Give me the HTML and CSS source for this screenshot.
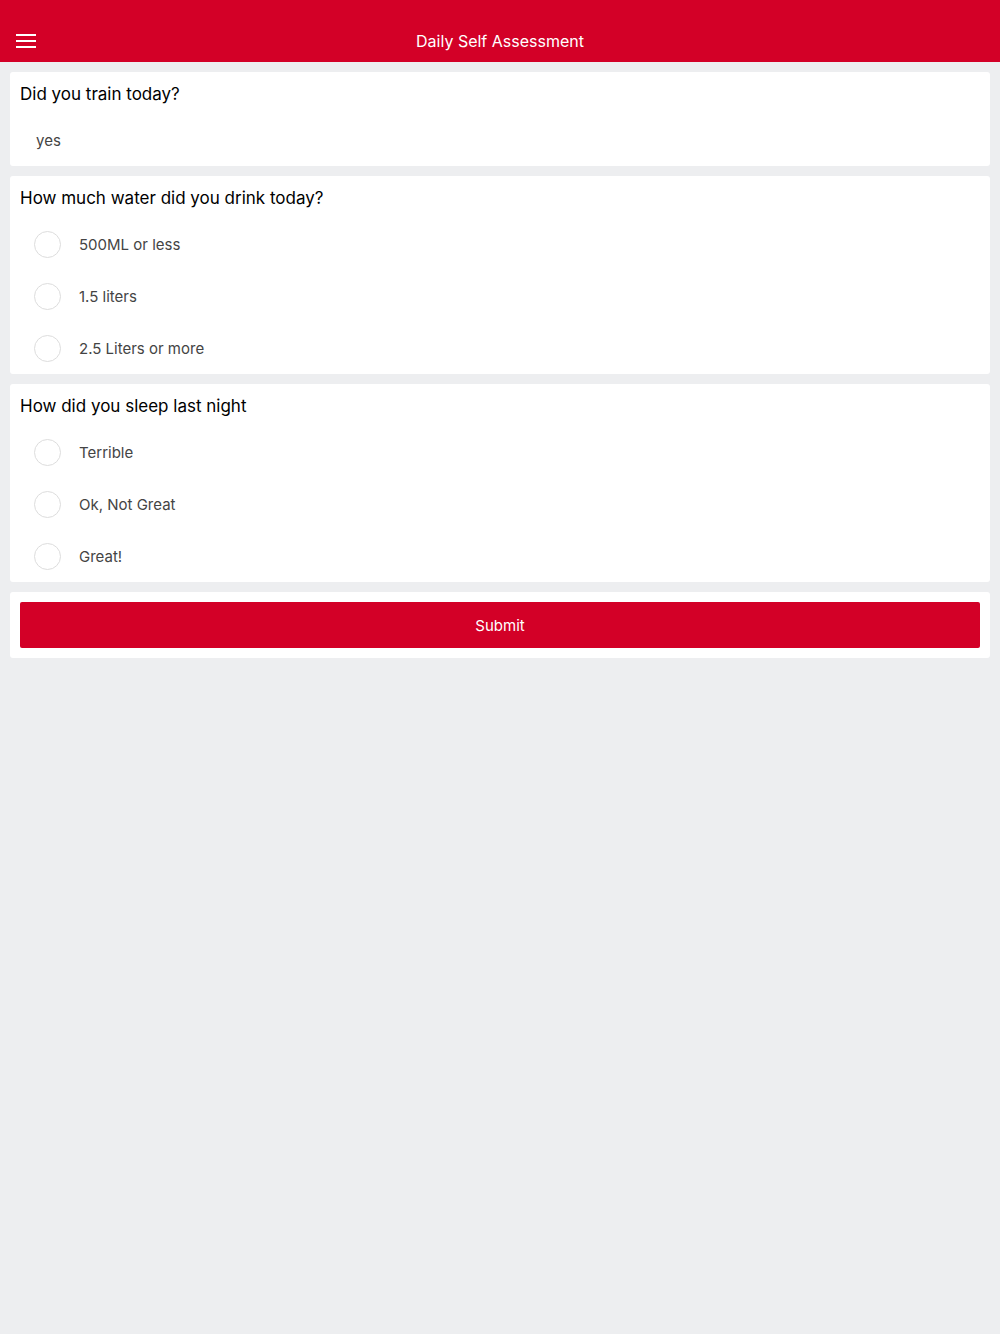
FILE: index.html
```html
<!DOCTYPE html>
<html>
  <head>
    <meta charset="utf-8">
    <title>Daily Self Assessment</title>
    <link rel="stylesheet" href="styles.css">
  </head>
  <body>
    <div class="header">
      <div class="menuBtn">
        <svg width="20" height="16" viewBox="0 0 20 16">
          <rect x="0" y="1" width="20" height="2" fill="#fff"/>
          <rect x="0" y="7" width="20" height="2" fill="#fff"/>
          <rect x="0" y="13" width="20" height="2" fill="#fff"/>
        </svg>
      </div>
      <div class="title">Daily Self Assessment</div>
    </div>

    <div class="content">
      <div class="card">
        <div class="question">Did you train today?</div>
        <div class="row"><span class="answer">yes</span></div>
      </div>

      <div class="card">
        <div class="question">How much water did you drink today?</div>
        <div class="row"><span class="radio"></span><span class="label">500ML or less</span></div>
        <div class="row"><span class="radio"></span><span class="label">1.5 liters</span></div>
        <div class="row"><span class="radio"></span><span class="label">2.5 Liters or more</span></div>
      </div>

      <div class="card">
        <div class="question">How did you sleep last night</div>
        <div class="row"><span class="radio"></span><span class="label">Terrible</span></div>
        <div class="row"><span class="radio"></span><span class="label">Ok, Not Great</span></div>
        <div class="row"><span class="radio"></span><span class="label">Great!</span></div>
      </div>

      <div class="card submitCard">
        <button class="submitBtn">Submit</button>
      </div>
    </div>
  </body>
</html>
```

FILE: styles.css
```css
html {
  background-color: #edeef0;
  font-family: Inter, "Noto Sans", sans-serif;
}

body {
  margin: 0;
}

.header {
  background-color: #d30027;
  height: 62px;
  padding-top: 20px;
  box-sizing: border-box;
  display: flex;
  align-items: center;
  justify-content: center;
  position: relative;
}

.menuBtn {
  position: absolute;
  left: 16px;
  top: 33px;
  height: 16px;
}

.title {
  color: #fff;
  font-size: 16px;
  line-height: 42px;
}

.content {
  padding: 10px;
  display: flex;
  flex-direction: column;
  gap: 10px;
}

.card {
  background-color: #fff;
  border-radius: 3px;
}

.question {
  color: #000;
  font-size: 17px;
  line-height: 22px;
  padding: 11px 10px 0 10px;
  margin-bottom: 9px;
}

.row {
  height: 52px;
  display: flex;
  align-items: center;
  padding-left: 24px;
}

.answer {
  color: #444;
  font-size: 15px;
  margin-left: 2px;
}

.radio {
  width: 27px;
  height: 27px;
  border: 1px solid #dddddd;
  border-radius: 50%;
  box-sizing: border-box;
  flex-shrink: 0;
}

.label {
  color: #444;
  font-size: 15px;
  margin-left: 18px;
}

.submitCard {
  padding: 10px;
}

.submitBtn {
  display: block;
  width: 100%;
  height: 46px;
  border: none;
  border-radius: 2px;
  background-color: #d30027;
  color: #fff;
  font-family: Inter, "Noto Sans", sans-serif;
  font-size: 15px;
}
```
